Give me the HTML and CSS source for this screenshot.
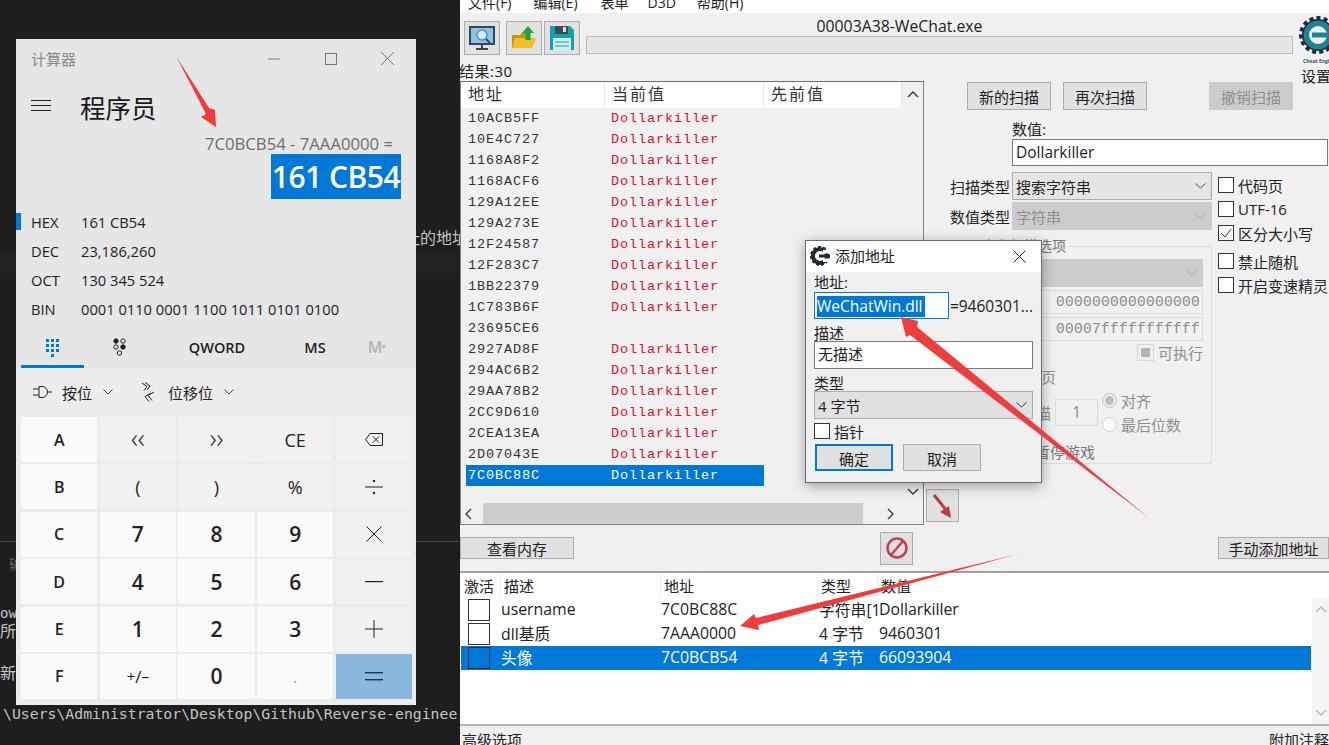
FILE: index.html
```html
<!DOCTYPE html>
<html lang="zh-CN">
<head>
    <meta charset="UTF-8">
    <title>计算器 - Cheat Engine</title>
    <link rel="stylesheet" href="styles.css">
</head>
<body>
    <!-- editor behind the windows -->
    <div class="editor">
        <div class="ed-line ed-addr">址的地址</div>
        <div class="ed-band"></div>
        <div class="ed-rule"></div>
        <div class="ed-tab">输出</div>
        <div class="ed-mono ed-ows">ows</div>
        <div class="ed-line ed-all">所有</div>
        <div class="ed-line ed-new">新的</div>
        <div class="ed-mono ed-path">\Users\Administrator\Desktop\Github\Reverse-enginee</div>
    </div>

    <!-- calculator -->
    <div class="calc">
        <div class="calc-title">
            <span class="calc-name">计算器</span>
            <span class="win-btn"><svg width="12" height="12"><path d="M0 6h12" stroke="#777" fill="none"/></svg></span>
            <span class="win-btn"><svg width="12" height="12"><rect x=".5" y=".5" width="11" height="11" stroke="#777" fill="none"/></svg></span>
            <span class="win-btn"><svg width="13" height="13"><path d="M0 0l13 13M13 0L0 13" stroke="#777" fill="none"/></svg></span>
        </div>
        <div class="calc-head">
            <svg class="burger" width="20" height="12"><path d="M0 .5h20M0 5.5h20M0 10.5h20" stroke="#222" fill="none"/></svg>
            <span class="calc-mode">程序员</span>
        </div>
        <div class="calc-expr">7C0BCB54 - 7AAA0000 =</div>
        <div class="calc-result"><span class="result-sel">161 CB54</span></div>
        <div class="radix">
            <div class="radix-row active"><b>HEX</b><span>161 CB54</span></div>
            <div class="radix-row"><b>DEC</b><span>23,186,260</span></div>
            <div class="radix-row"><b>OCT</b><span>130 345 524</span></div>
            <div class="radix-row"><b>BIN</b><span>0001 0110 0001 1100 1011 0101 0100</span></div>
        </div>
        <div class="calc-tabs">
            <div class="tab tab-keys">
                <svg width="14" height="18" fill="#0078d7">
                    <rect x="0" y="0" width="3" height="3"/><rect x="5" y="0" width="3" height="3"/><rect x="10" y="0" width="3" height="3"/>
                    <rect x="0" y="5" width="3" height="3"/><rect x="5" y="5" width="3" height="3"/><rect x="10" y="5" width="3" height="3"/>
                    <rect x="0" y="10" width="3" height="3"/><rect x="5" y="10" width="3" height="3"/><rect x="10" y="10" width="3" height="3"/>
                    <rect x="5" y="15" width="3" height="3"/>
                </svg>
            </div>
            <div class="tab tab-bits">
                <svg width="14" height="18" stroke="#222" fill="none">
                    <circle cx="3" cy="3" r="2.2" fill="#222"/><circle cx="10" cy="3" r="2.2"/>
                    <circle cx="3" cy="9" r="2.2"/><circle cx="10" cy="9" r="2.2" fill="#222"/>
                    <circle cx="6.5" cy="15" r="2.2"/>
                </svg>
            </div>
            <div class="tab tab-qword">QWORD</div>
            <div class="tab tab-ms">MS</div>
            <div class="tab tab-m">M<sup>▾</sup></div>
        </div>
        <div class="calc-lower">
            <div class="bit-row">
                <svg class="gate" width="20" height="14" fill="none" stroke="#222">
                    <path d="M6 1.5h3a5.5 5.5 0 0 1 0 11H6zM0 4h6M0 10h6M15 7h4"/>
                </svg>
                <span class="bit-label">按位</span>
                <svg class="chev" width="10" height="6"><path d="M.5.5L5 5 9.5.5" stroke="#444" fill="none"/></svg>
                <svg class="shift" width="16" height="20" fill="none" stroke="#222">
                    <path d="M2 1l5 3.500-3 4M5 .5l5 3.500-3 4M14 10l-6 3.500 4 5M11 11l-6 3.500 4 5"/>
                </svg>
                <span class="bit-label">位移位</span>
                <svg class="chev" width="10" height="6"><path d="M.5.5L5 5 9.5.5" stroke="#444" fill="none"/></svg>
            </div>
            <div class="keys">
                <div class="key white letter">A</div>
                <div class="key op chevs">‹‹</div>
                <div class="key op chevs">››</div>
                <div class="key op">CE</div>
                <div class="key op"><svg width="18" height="13" fill="none" stroke="#222"><path d="M5 .5h12.5v12H5L.7 6.500zM8 3.500l6 6M14 3.500l-6 6"/></svg></div>
                <div class="key white letter">B</div>
                <div class="key op">(</div>
                <div class="key op">)</div>
                <div class="key op">%</div>
                <div class="key op"><svg width="18" height="16" fill="#222"><rect y="7.5" width="18" height="1"/><circle cx="9" cy="2" r="1.2"/><circle cx="9" cy="14" r="1.2"/></svg></div>
                <div class="key white letter">C</div>
                <div class="key white digit">7</div>
                <div class="key white digit">8</div>
                <div class="key white digit">9</div>
                <div class="key op"><svg width="16" height="16"><path d="M.5.5l15 15M15.500.5l-15 15" stroke="#222" fill="none"/></svg></div>
                <div class="key white letter">D</div>
                <div class="key white digit">4</div>
                <div class="key white digit">5</div>
                <div class="key white digit">6</div>
                <div class="key op"><svg width="18" height="2"><rect width="18" height="1.2" fill="#222"/></svg></div>
                <div class="key white letter">E</div>
                <div class="key white digit">1</div>
                <div class="key white digit">2</div>
                <div class="key white digit">3</div>
                <div class="key op"><svg width="18" height="18"><path d="M0 9h18M9 0v18" stroke="#222" fill="none"/></svg></div>
                <div class="key white letter">F</div>
                <div class="key white sign"><small class="up">+</small>/<small class="down">–</small></div>
                <div class="key white digit">0</div>
                <div class="key white dot">.</div>
                <div class="key equals"><svg width="18" height="9" fill="#1a3550"><rect width="18" height="1.4"/><rect y="7" width="18" height="1.4"/></svg></div>
            </div>
        </div>
    </div>

    <!-- cheat engine -->
    <div class="ce">
        <div class="ce-menu">
            <span class="menu-item m1">文件(F)</span>
            <span class="menu-item m2">编辑(E)</span>
            <span class="menu-item m3">表单</span>
            <span class="menu-item m4">D3D</span>
            <span class="menu-item m5">帮助(H)</span>
        </div>
        <div class="ce-top">
            <div class="ce-top-main">
                <div class="ce-tools">
                    <button class="tool">
                        <svg width="26" height="26">
                            <rect x="1" y="2" width="24" height="17" fill="#8fc3e8" stroke="#33475a" stroke-width="2"/>
                            <circle cx="13" cy="10" r="5" fill="#d4ecfa" stroke="#5b8fb5" stroke-width="1.5"/>
                            <path d="M17 14l4 4" stroke="#33475a" stroke-width="2"/>
                            <path d="M13 19v4M7 24h12" stroke="#33475a" stroke-width="2"/>
                        </svg>
                    </button>
                    <button class="tool tool-open">
                        <svg width="26" height="26">
                            <path d="M1 10h8l2-2h7v15H1z" fill="#c99412"/>
                            <path d="M4 13h21l-4 10H1z" fill="#f4bd25"/>
                            <path d="M17 1l6 7h-3.500v7h-5V8H11z" fill="#1fa23c"/>
                        </svg>
                    </button>
                    <button class="tool tool-save">
                        <svg width="26" height="26">
                            <path d="M1 1h20l4 4v20H1z" fill="#14a0a8"/>
                            <rect x="6" y="1" width="13" height="8" fill="#3b4c55"/>
                            <rect x="14" y="2" width="3" height="5" fill="#e0e0e0"/>
                            <rect x="4" y="13" width="18" height="12" fill="#cfeee9"/>
                            <path d="M6 17h14M6 21h14" stroke="#14a0a8"/>
                        </svg>
                    </button>
                    <div class="ce-proc">
                        <div class="proc-name">00003A38-WeChat.exe</div>
                        <div class="proc-bar"></div>
                    </div>
                </div>
                <div class="ce-results">结果:30</div>
            </div>
            <div class="ce-logo">
                <svg width="42" height="40">
                    <circle cx="20" cy="20" r="16" fill="#1d2c36"/>
                    <circle cx="20" cy="20" r="17" fill="none" stroke="#1d2c36" stroke-width="4" stroke-dasharray="4 3.100"/>
                    <circle cx="20" cy="20" r="14.500" fill="#1e8296"/>
                    <circle cx="20" cy="20" r="9" fill="#f0f0f0"/>
                    <rect x="14" y="17.500" width="24" height="5" fill="#1e8296"/>
                </svg>
                <div class="logo-tiny">Cheat Engine</div>
                <div class="logo-label">设置</div>
            </div>
        </div>

        <div class="ce-mid">
            <div class="scan-list">
                <div class="scan-body">
                    <div class="scan-table">
                        <div class="scan-head">
                            <span class="h-addr">地址</span>
                            <span class="h-cur">当前值</span>
                            <span class="h-prev">先前值</span>
                        </div>
                        <div class="scan-row"><span>10ACB5FF</span><span class="val">Dollarkiller</span></div>
                        <div class="scan-row"><span>10E4C727</span><span class="val">Dollarkiller</span></div>
                        <div class="scan-row"><span>1168A8F2</span><span class="val">Dollarkiller</span></div>
                        <div class="scan-row"><span>1168ACF6</span><span class="val">Dollarkiller</span></div>
                        <div class="scan-row"><span>129A12EE</span><span class="val">Dollarkiller</span></div>
                        <div class="scan-row"><span>129A273E</span><span class="val">Dollarkiller</span></div>
                        <div class="scan-row"><span>12F24587</span><span class="val">Dollarkiller</span></div>
                        <div class="scan-row"><span>12F283C7</span><span class="val">Dollarkiller</span></div>
                        <div class="scan-row"><span>1BB22379</span><span class="val">Dollarkiller</span></div>
                        <div class="scan-row"><span>1C783B6F</span><span class="val">Dollarkiller</span></div>
                        <div class="scan-row"><span>23695CE6</span><span class="val"></span></div>
                        <div class="scan-row"><span>2927AD8F</span><span class="val">Dollarkiller</span></div>
                        <div class="scan-row"><span>294AC6B2</span><span class="val">Dollarkiller</span></div>
                        <div class="scan-row"><span>29AA78B2</span><span class="val">Dollarkiller</span></div>
                        <div class="scan-row"><span>2CC9D610</span><span class="val">Dollarkiller</span></div>
                        <div class="scan-row"><span>2CEA13EA</span><span class="val">Dollarkiller</span></div>
                        <div class="scan-row"><span>2D07043E</span><span class="val">Dollarkiller</span></div>
                        <div class="scan-row selected"><span>7C0BC88C</span><span class="val">Dollarkiller</span></div>
                    </div>
                    <div class="vscroll">
                        <svg width="12" height="7"><path d="M1 6l5-5 5 5" stroke="#444" stroke-width="1.500" fill="none"/></svg>
                        <svg width="12" height="7"><path d="M1 1l5 5 5-5" stroke="#444" stroke-width="1.500" fill="none"/></svg>
                    </div>
                </div>
                <div class="hscroll">
                    <svg width="7" height="12"><path d="M6 1L1 6l5 5" stroke="#444" stroke-width="1.500" fill="none"/></svg>
                    <div class="hthumb"></div>
                    <svg width="7" height="12"><path d="M1 1l5 5-5 5" stroke="#444" stroke-width="1.500" fill="none"/></svg>
                </div>
            </div>

            <div class="scan-panel">
                <div class="scan-btns">
                    <button class="btn">新的扫描</button>
                    <button class="btn">再次扫描</button>
                    <button class="btn off undo">撤销扫描</button>
                </div>
                <div class="value-label">数值:</div>
                <div class="field value-input">Dollarkiller</div>
                <div class="scan-opts">
                    <div class="scan-form">
                        <div class="form-row">
                            <span class="form-label">扫描类型</span>
                            <div class="combo">搜索字符串<svg width="11" height="6"><path d="M.5.5L5.500 5 10.500.5" stroke="#555" fill="none"/></svg></div>
                        </div>
                        <div class="form-row">
                            <span class="form-label">数值类型</span>
                            <div class="combo off">字符串<svg width="11" height="6"><path d="M.5.5L5.500 5 10.500.5" stroke="#aaa" fill="none"/></svg></div>
                        </div>
                        <fieldset class="mem-opts">
                            <legend>内存扫描选项</legend>
                            <div class="combo off mem-combo"><svg width="11" height="6"><path d="M.5.5L5.500 5 10.500.5" stroke="#aaa" fill="none"/></svg></div>
                            <div class="range">0000000000000000</div>
                            <div class="range">00007fffffffffff</div>
                            <div class="exec"><span class="tri"></span>可执行</div>
                            <div class="mem-page">内存页</div>
                            <div class="fast">
                                <span class="fast-label">扫描</span>
                                <div class="fast-num">1</div>
                                <div class="fast-radios">
                                    <div class="radio-row"><span class="radio on"></span>对齐</div>
                                    <div class="radio-row"><span class="radio"></span>最后位数</div>
                                </div>
                            </div>
                            <div class="pause">暂停游戏</div>
                        </fieldset>
                    </div>
                    <div class="checks">
                        <label class="check"><span class="box"></span>代码页</label>
                        <label class="check"><span class="box"></span>UTF-16</label>
                        <label class="check"><span class="box"><svg width="14" height="14"><path d="M2 7l4 4 6-8" stroke="#333" fill="none"/></svg></span>区分大小写</label>
                        <label class="check gap"><span class="box"></span>禁止随机</label>
                        <label class="check"><span class="box"></span>开启变速精灵</label>
                    </div>
                </div>
                <button class="tool to-list">
                    <svg width="24" height="26" fill="none">
                        <path d="M3 2l13 16" stroke="#c2393d" stroke-width="3"/>
                        <path d="M20 25l-11-6 9-6z" fill="#c2393d"/>
                    </svg>
                </button>
            </div>
        </div>

        <div class="ce-actions">
            <button class="btn mem-btn">查看内存</button>
            <button class="tool stop-btn">
                <svg width="24" height="24" fill="none" stroke="#c63d4f" stroke-width="2.500">
                    <circle cx="12" cy="12" r="9.500"/>
                    <path d="M6 19L18 5"/>
                </svg>
            </button>
            <button class="btn add-btn">手动添加地址</button>
        </div>
        <div class="ce-grip"></div>

        <div class="addr-area">
            <div class="addr-main">
                <div class="addr-head">
                    <span class="c-act">激活</span><span class="c-desc">描述</span><span class="c-addr">地址</span><span class="c-type">类型</span><span class="c-val">数值</span>
                </div>
                <div class="addr-row">
                    <span class="addr-box"></span><span class="c-desc2">username</span><span class="c-addr2">7C0BC88C</span><span class="c-type2">字符串[1</span><span class="c-val2">Dollarkiller</span>
                </div>
                <div class="addr-row">
                    <span class="addr-box"></span><span class="c-desc2">dll基质</span><span class="c-addr2">7AAA0000</span><span class="c-type2">4 字节</span><span class="c-val2">9460301</span>
                </div>
                <div class="addr-row selected">
                    <span class="addr-box"></span><span class="c-desc2">头像</span><span class="c-addr2">7C0BCB54</span><span class="c-type2">4 字节</span><span class="c-val2">66093904</span>
                </div>
            </div>
            <div class="addr-scroll">
                <svg width="12" height="7"><path d="M1 6l5-5 5 5" stroke="#bbb" stroke-width="1.500" fill="none"/></svg>
                <svg width="12" height="7"><path d="M1 1l5 5 5-5" stroke="#bbb" stroke-width="1.500" fill="none"/></svg>
            </div>
        </div>
        <div class="ce-foot">
            <span>高级选项</span>
            <span>附加注释</span>
        </div>
    </div>

    <!-- add address dialog -->
    <div class="dialog">
        <div class="dlg-title">
            <svg width="20" height="20">
                <circle cx="10" cy="10" r="7" fill="none" stroke="#1d2c36" stroke-width="4"/>
                <circle cx="10" cy="10" r="9" fill="none" stroke="#1d2c36" stroke-width="2" stroke-dasharray="3 2"/>
                <rect x="9" y="8.500" width="11" height="3" fill="#1d2c36"/>
                <rect x="13" y="4" width="7" height="3.500" fill="#fff"/>
                <rect x="13" y="12.500" width="7" height="3.500" fill="#fff"/>
            </svg>
            <span class="dlg-name">添加地址</span>
            <svg class="dlg-close" width="13" height="13"><path d="M.5.5l12 12M12.500.5l-12 12" stroke="#222" fill="none"/></svg>
        </div>
        <div class="dlg-body">
            <div class="dlg-label first">地址:</div>
            <div class="dlg-addr">
                <div class="field addr-input"><span class="addr-sel">WeChatWin.dll</span></div>
                <span class="addr-eq">=9460301...</span>
            </div>
            <div class="dlg-label">描述</div>
            <div class="field dlg-desc">无描述</div>
            <div class="dlg-label">类型</div>
            <div class="combo dlg-type">4 字节<svg width="11" height="6"><path d="M.5.5L5.500 5 10.500.5" stroke="#333" fill="none"/></svg></div>
            <label class="check dlg-ptr"><span class="box"></span>指针</label>
            <div class="dlg-btns">
                <button class="btn ok">确定</button>
                <button class="btn cancel">取消</button>
            </div>
        </div>
    </div>

    <!-- red arrows drawn on top of the screenshot -->
    <svg class="marks" width="1329" height="745" fill="#ee3d3d">
        <polygon points="176,56 209,108 215,110 216,127 201,117 206,114"/>
        <polygon points="901,317 918,321 917,327 1149,518 910,335 906,337"/>
        <polygon points="740,626 754,614 756,618 1022,553 758,625 759,630"/>
    </svg>
</body>
</html>
```

FILE: styles.css
```css
* {
    box-sizing: border-box;
}
html, body {
    margin: 0;
    height: 745px;
    overflow: hidden;
}
body {
    position: relative;
    width: 1329px;
    background-color: #1e1e1e;
    font-family: "Open Sans", "Noto Sans CJK SC", sans-serif;
    font-size: 15px;
    color: #222;
}
button {
    font-family: inherit;
    margin: 0;
    padding: 0;
}

/* editor behind */
.editor {
    width: 460px;
    height: 745px;
    overflow: hidden;
    color: #c4c4c4;
    white-space: nowrap;
}
.ed-line {
    font-size: 16px;
    line-height: 20px;
}
.ed-addr {
    margin-top: 228px;
    padding-left: 404px;
}
.ed-band {
    height: 21px;
    margin-top: 5px;
    background-color: #212121;
}
.ed-rule {
    height: 1px;
    margin-top: 267px;
    background-color: #454545;
}
.ed-tab {
    margin-top: 14px;
    padding-left: 9px;
    font-size: 13px;
    line-height: 16px;
    color: #666;
}
.ed-mono {
    font-family: "DejaVu Sans Mono", monospace;
}
.ed-ows {
    margin-top: 33px;
    font-size: 14px;
    line-height: 16px;
}
.ed-all {
    margin-top: 0;
}
.ed-new {
    margin-top: 22px;
}
.ed-path {
    margin-top: 21px;
    padding-left: 3px;
    font-size: 14.800px;
    line-height: 20px;
}

/* calculator window */
.calc {
    position: absolute;
    left: 16px;
    top: 39px;
    width: 400px;
    height: 665px;
    background-color: #e6e6e6;
}
.calc-title {
    display: flex;
    align-items: center;
    height: 40px;
    padding-left: 15px;
    padding-bottom: 1px;
}
.calc-name {
    flex: 1;
    color: #8a8a8a;
}
.win-btn {
    display: flex;
    justify-content: center;
    width: 57px;
}
.calc-head {
    display: flex;
    align-items: center;
    height: 54px;
    padding-left: 15px;
}
.burger {
    margin-right: 29px;
}
.calc-mode {
    font-size: 25.500px;
    color: #1a1a1a;
}
.calc-expr {
    height: 21px;
    padding-right: 23px;
    text-align: right;
    font-size: 16.700px;
    line-height: 21px;
    color: #6e6e6e;
}
.calc-result {
    height: 45px;
    padding-right: 15px;
    text-align: right;
}
.result-sel {
    display: inline-block;
    width: 130px;
    height: 45px;
    background-color: #0078d7;
    color: #fff;
    font-size: 30px;
    font-weight: 600;
    letter-spacing: -0.500px;
    line-height: 45px;
    text-align: center;
    white-space: nowrap;
}
.radix {
    margin-top: 8px;
}
.radix-row {
    position: relative;
    display: flex;
    align-items: center;
    height: 29px;
    padding-left: 15px;
    font-size: 14.700px;
}
.radix-row b {
    width: 50px;
    font-weight: 400;
}
.radix-row.active::before {
    content: "";
    position: absolute;
    left: 0;
    top: 6px;
    width: 5px;
    height: 17px;
    background-color: #0078d7;
}
.calc-tabs {
    display: flex;
    height: 34px;
    margin-top: 11px;
    padding-left: 5px;
}
.tab {
    display: flex;
    justify-content: center;
    align-items: center;
    font-size: 14.500px;
    font-weight: 600;
    padding-bottom: 8px;
}
.tab-keys {
    width: 63px;
    border-bottom: 3px solid #0078d7;
    padding-bottom: 4px;
}
.tab-bits {
    width: 72px;
}
.tab-qword {
    width: 122px;
}
.tab-ms {
    width: 74px;
}
.tab-m {
    width: 50px;
    font-size: 16px;
    color: #b5b5b5;
}
.tab-m sup {
    font-size: 7px;
    line-height: 0;
}
.calc-lower {
    height: 337px;
    padding: 0 4px 5px 5px;
    background-color: #ececec;
}
.bit-row {
    display: flex;
    align-items: center;
    height: 49px;
    padding-left: 12px;
    padding-bottom: 1px;
}
.bit-label {
    margin-left: 9px;
}
.chev {
    margin-left: 11px;
}
.shift {
    margin-left: 27px;
}
.shift + .bit-label {
    margin-left: 12px;
}
.keys {
    display: grid;
    grid-template-columns: repeat(5, 1fr);
    grid-template-rows: repeat(6, 1fr);
    gap: 2.300px;
    height: 282px;
}
.key {
    display: flex;
    justify-content: center;
    align-items: center;
    background-color: #f1f1f1;
    font-size: 18px;
    color: #222;
}
.key.white {
    background-color: #fafafa;
}
.chevs {
    font-size: 27px;
    font-weight: 300;
    line-height: 1;
    padding-bottom: 5px;
}
.letter {
    font-size: 16px;
    font-weight: 600;
}
.digit {
    font-size: 21px;
    font-weight: 600;
}
.sign {
    font-size: 17px;
}
.sign small {
    font-size: 15px;
}
.sign .up {
    vertical-align: 5px;
}
.sign .down {
    vertical-align: -3px;
}
.dot {
    color: #aaa;
}
.key.equals {
    background-color: #8ab7de;
}

/* cheat engine window */
.ce {
    position: absolute;
    left: 460px;
    top: 0;
    display: flex;
    flex-direction: column;
    width: 869px;
    height: 745px;
    overflow: hidden;
    background-color: #f0f0f0;
}
.ce-menu {
    display: flex;
    flex-shrink: 0;
    height: 13px;
    overflow: hidden;
    background-color: #fff;
    line-height: 6px;
    white-space: nowrap;
}
.menu-item {
    font-size: 14px;
}
.m1 { margin-left: 8px; }
.m2 { margin-left: 22px; }
.m3 { margin-left: 23px; }
.m4 { margin-left: 19px; }
.m5 { margin-left: 21px; }
.ce-top {
    display: flex;
    flex-shrink: 0;
    height: 68px;
}
.ce-top-main {
    width: 838px;
}
.ce-tools {
    display: flex;
    gap: 2px;
    padding: 8px 0 0 4px;
}
.tool {
    display: flex;
    justify-content: center;
    align-items: center;
    width: 36px;
    height: 34px;
    background-color: #e1e1e1;
    border: 1px solid #adadad;
}
.tool-open {
    margin-left: 4px;
}
.ce-proc {
    width: 707px;
    margin-left: 4px;
}
.proc-name {
    height: 15px;
    padding-right: 80px;
    text-align: center;
    font-size: 15.800px;
    line-height: 10px;
}
.proc-bar {
    height: 18px;
    background-color: #e6e6e6;
    border: 1px solid #bcbcbc;
}
.ce-results {
    margin-left: -1px;
    margin-top: 7px;
    letter-spacing: 0.500px;
    line-height: 18px;
    white-space: nowrap;
}
.ce-logo {
    margin-left: 0;
    width: 31px;
}
.ce-logo svg {
    display: block;
    margin-top: 2px;
}
.logo-tiny {
    margin: 3px 0 0 5px;
    font-size: 5px;
    font-weight: 700;
    line-height: 6px;
    color: #1b5a70;
    white-space: nowrap;
}
.logo-label {
    margin: 3px 0 0 3px;
    line-height: 18px;
    white-space: nowrap;
}
.ce-mid {
    display: flex;
    flex-shrink: 0;
    height: 444px;
}
.scan-list {
    display: flex;
    flex-direction: column;
    width: 464px;
    border: 1px solid #828282;
    border-top-color: #6f6f6f;
}
.scan-body {
    display: flex;
    flex: 1;
}
.scan-table {
    width: 441px;
}
.scan-head {
    display: flex;
    height: 26px;
    background-color: #fff;
    font-size: 16px;
    line-height: 24px;
    letter-spacing: 2px;
    color: #333;
}
.scan-head span {
    padding-left: 7px;
    border-right: 1px solid #e5e5e5;
}
.h-addr {
    width: 144px;
}
.h-cur {
    width: 159px;
}
.h-prev {
    flex: 1;
    border-right: none;
}
.scan-row {
    display: grid;
    grid-template-columns: 143px 1fr;
    width: 298px;
    height: 21px;
    margin-left: 5px;
    padding-left: 2px;
    font-family: "Liberation Mono", monospace;
    font-size: 13.500px;
    letter-spacing: 0.900px;
    line-height: 21px;
    color: #333;
}
.val {
    color: #d8102c;
}
.scan-row.selected {
    background-color: #0078d7;
    color: #fff;
}
.scan-row.selected .val {
    color: #fff;
}
.vscroll {
    display: flex;
    flex-direction: column;
    justify-content: space-between;
    align-items: center;
    width: 21px;
    padding: 9px 0 8px;
}
.hscroll {
    display: flex;
    align-items: center;
    height: 21px;
    padding-left: 4px;
}
.hthumb {
    width: 380px;
    height: 21px;
    margin: 0 24px 0 11px;
    background-color: #cdcdcd;
}
.scan-panel {
    width: 405px;
    padding-left: 2px;
}
.btn {
    height: 28px;
    background-color: #e1e1e1;
    border: 1px solid #adadad;
    font-size: 15px;
    color: #222;
}
.btn.off {
    background-color: #cccccc;
    border-color: #cccccc;
    color: #8f8f8f;
}
.scan-btns {
    display: flex;
    gap: 12px;
    padding: 1px 0 0 41px;
}
.scan-btns .btn {
    width: 84px;
}
.scan-btns .undo {
    margin-left: 50px;
}
.value-label {
    margin: 10px 0 1px 86px;
    line-height: 18px;
}
.field {
    height: 27px;
    background-color: #fff;
    border: 1px solid #7a7a7a;
    line-height: 25px;
    white-space: nowrap;
}
.value-input {
    width: 316px;
    margin-left: 86px;
    padding-left: 3px;
    font-size: 15.500px;
}
.scan-opts {
    display: flex;
    margin-top: 6px;
}
.scan-form {
    width: 286px;
}
.form-row {
    display: flex;
    align-items: center;
    margin-bottom: 2px;
}
.form-label {
    flex: none;
    width: 86px;
    padding-left: 24px;
    white-space: nowrap;
}
.combo {
    display: flex;
    justify-content: space-between;
    align-items: center;
    width: 200px;
    height: 28px;
    padding: 0 5px 0 3px;
    background-color: #e5e5e5;
    border: 1px solid #adadad;
}
.combo.off {
    background-color: #cccccc;
    border-color: #cccccc;
    color: #8f8f8f;
}
.mem-opts {
    width: 239px;
    height: 226px;
    margin: 8px 0 0 47px;
    padding: 5px 8px 0 6px;
    border: 1px solid #dcdcdc;
    color: #8f8f8f;
}
.mem-opts legend {
    margin-left: 0;
    padding: 0 2px;
    font-size: 14px;
    line-height: 16px;
    color: #777;
}
.mem-combo {
    justify-content: flex-end;
    width: 100%;
}
.range {
    height: 24px;
    margin-top: 3px;
    padding-right: 2px;
    background-color: #f0f0f0;
    border: 1px solid #dadada;
    text-align: right;
    font-family: "Liberation Mono", monospace;
    font-size: 14.500px;
    letter-spacing: 0.300px;
    line-height: 22px;
    color: #8c8c8c;
}
.exec {
    display: flex;
    justify-content: flex-end;
    align-items: center;
    gap: 5px;
    margin-top: 2px;
    height: 18px;
}
.tri {
    width: 15px;
    height: 15px;
    border: 3px solid #f0f0f0;
    outline: 1px solid #d5d5d5;
    background-color: #b4b4b4;
}
.mem-page {
    margin-top: 6px;
    padding-left: 31px;
    line-height: 20px;
}
.fast {
    display: flex;
    align-items: center;
    margin-top: 1px;
}
.fast-label {
    width: 75px;
    padding-right: 4px;
    text-align: right;
    white-space: nowrap;
}
.fast-num {
    width: 43px;
    height: 27px;
    border: 1px solid #dadada;
    font-size: 16px;
    text-align: center;
    line-height: 25px;
}
.fast-radios {
    margin-left: 4px;
}
.radio-row {
    display: flex;
    align-items: center;
    gap: 4px;
    height: 24px;
}
.radio {
    width: 15px;
    height: 15px;
    border-radius: 50%;
    background-color: #fafafa;
    border: 1px solid #d0d0d0;
}
.radio.on {
    background-color: #bdbdbd;
    box-shadow: inset 0 0 0 2px #f0f0f0;
}
.pause {
    margin-top: 6px;
    padding-left: 55px;
    line-height: 20px;
    white-space: nowrap;
    color: #777;
}
.checks {
    margin-left: 6px;
    margin-top: 1px;
    white-space: nowrap;
}
.check {
    display: flex;
    align-items: center;
    gap: 4px;
    height: 24px;
}
.check.gap {
    margin-top: 4px;
}
.box {
    display: block;
    width: 16px;
    height: 16px;
    background-color: #fff;
    border: 1px solid #333;
}
.box svg {
    display: block;
}
.to-list {
    width: 33px;
    height: 33px;
    margin-top: 25px;
}
.ce-actions {
    display: flex;
    flex-shrink: 0;
    height: 46px;
    align-items: center;
}
.ce-actions .btn {
    height: 22px;
}
.mem-btn {
    width: 114px;
}
.stop-btn {
    width: 33px;
    height: 33px;
    margin-left: 306px;
}
.add-btn {
    width: 111px;
    margin-left: 305px;
}
.ce-grip {
    height: 2px;
    flex-shrink: 0;
    background-color: #a0a0a0;
}
.addr-area {
    display: flex;
    height: 153px;
    flex-shrink: 0;
    background-color: #fff;
    border-bottom: 2px solid #b5b5b5;
}
.addr-main {
    width: 851px;
    padding-left: 1px;
}
.addr-head {
    display: flex;
    height: 25px;
    align-items: center;
}
.addr-head span {
    padding-left: 3px;
    border-right: 1px solid #ededed;
    line-height: 24px;
}
.c-act { width: 40px; }
.c-desc { width: 160px; }
.c-addr { width: 157px; }
.c-type { width: 60px; }
.c-val { border-right: none !important; }
.addr-row {
    display: flex;
    align-items: center;
    height: 24px;
    padding-bottom: 2px;
    font-size: 15.800px;
    white-space: nowrap;
    color: #222;
}
.addr-row.selected {
    background-color: #0078d7;
    color: #fff;
}
.addr-box {
    width: 22px;
    height: 22px;
    margin: 2px 11px 0 7px;
    border: 1px solid #333;
    background-color: #fff;
}
.addr-row.selected .addr-box {
    background-color: #0078d7;
    border-color: #0b2c4f;
}
.c-desc2 { width: 160px; }
.c-addr2 { width: 158px; }
.c-type2 { width: 60px; overflow: hidden; }
.addr-scroll {
    display: flex;
    flex-direction: column;
    justify-content: space-between;
    align-items: center;
    width: 17px;
    margin-left: 1px;
    margin-top: 25px;
    padding: 8px 0 8px;
    background-color: #f4f4f4;
}
.ce-foot {
    display: flex;
    justify-content: space-between;
    padding: 5px 0 0 2px;
    line-height: 18px;
    white-space: nowrap;
}

/* add address dialog */
.dialog {
    position: absolute;
    left: 805px;
    top: 240px;
    width: 237px;
    height: 243px;
    background-color: #f0f0f0;
    border: 1px solid #6d6d6d;
    box-shadow: 0 3px 12px rgba(0,0,0,0.35);
}
.dlg-title {
    display: flex;
    align-items: center;
    height: 31px;
    padding-left: 4px;
    padding-bottom: 1px;
    background-color: #fff;
}
.dlg-name {
    flex: 1;
    margin-left: 5px;
    margin-top: -2px;
}
.dlg-close {
    margin-right: 15px;
}
.dlg-body {
    padding: 0 8px;
}
.dlg-label {
    height: 22px;
    line-height: 29px;
}
.dlg-label.first {
    height: 20px;
    line-height: 21px;
}
.dlg-addr {
    display: flex;
    align-items: center;
}
.addr-input {
    width: 136px;
    padding: 2px 2px;
    border-color: #0078d7;
    font-size: 16px;
    line-height: 22px;
}
.addr-sel {
    display: inline-block;
    width: 108px;
    height: 21px;
    background-color: #0078d7;
    color: #fff;
    line-height: 21px;
    font-size: 15.500px;
    white-space: nowrap;
}
.addr-eq {
    margin-left: 1px;
    font-size: 15.500px;
    white-space: nowrap;
}
.dlg-desc {
    width: 219px;
    height: 28px;
    padding-left: 3px;
}
.dlg-type {
    width: 219px;
    background-color: #e1e1e1;
    padding-left: 3px;
}
.dlg-ptr {
    height: 16px;
    margin-top: 4px;
}
.dlg-btns {
    display: flex;
    gap: 10px;
    margin: 5px 0 0 1px;
}
.dlg-btns .btn {
    width: 78px;
    height: 27px;
    padding-top: 1px;
}
.btn.ok {
    border: 2px solid #0078d7;
}

/* annotation arrows */
.marks {
    position: absolute;
    left: 0;
    top: 0;
    pointer-events: none;
}
```
